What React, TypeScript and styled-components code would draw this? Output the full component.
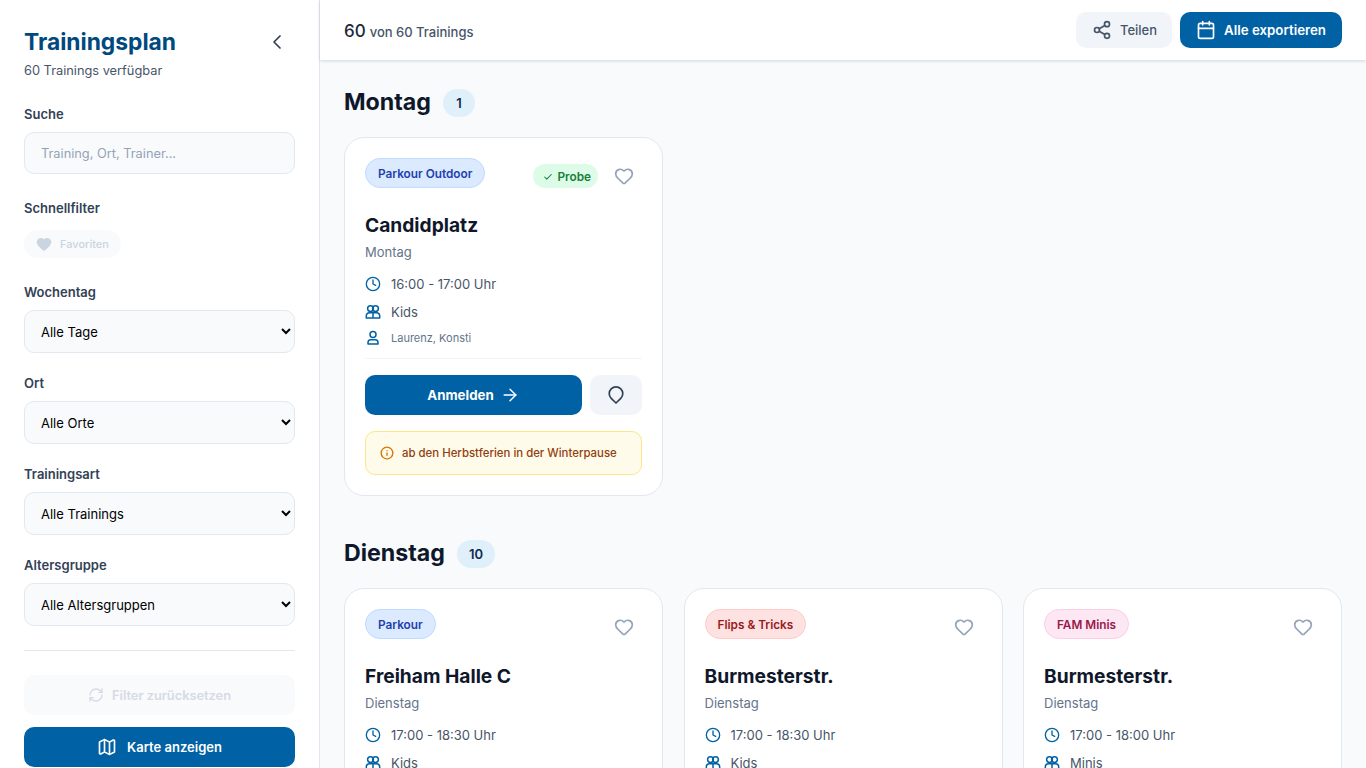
import React from 'react'
import styled, { createGlobalStyle } from 'styled-components'
import { ArrowRight, Calendar, Check, ChevronLeft, Clock, Heart, Info, Map as MapIcon, RefreshCw, Share2 } from 'lucide-react'

const GlobalStyle = createGlobalStyle`
  html, body {
    margin: 0;
    padding: 0;
    height: 100%;
    overflow: hidden;
  }
  body {
    font-family: Inter, "Liberation Sans", sans-serif;
    background: #f8fafc;
    color: #0f172a;
  }
  * {
    box-sizing: border-box;
  }
`

const Layout = styled.div`
  display: flex;
  height: 768px;
  overflow: hidden;
`

const Sidebar = styled.aside`
  flex: 0 0 320px;
  background: #fff;
  border-right: 1px solid #e2e8f0;
  padding: 24px 24px 0;
  display: flex;
  flex-direction: column;
`

const SidebarHead = styled.div`
  display: flex;
  justify-content: space-between;
  align-items: flex-start;
  margin-bottom: 23px;
`

const Title = styled.h1`
  margin: 0;
  font-size: 22.8px;
  line-height: 36px;
  font-weight: 700;
  color: #00497f;
`

const Subtitle = styled.p`
  margin: 1px 0 0;
  font-size: 12.8px;
  line-height: 20px;
  color: #475569;
`

const CollapseButton = styled.button`
  width: 36px;
  height: 36px;
  border: 0;
  background: none;
  padding: 0;
  display: flex;
  align-items: center;
  justify-content: center;
  color: #334155;
`

const Field = styled.div<{ $gap: number }>`
  margin-bottom: ${({ $gap }) => $gap}px;
`

const Label = styled.label<{ $tight?: boolean }>`
  display: block;
  font-size: 13px;
  line-height: 20px;
  font-weight: 600;
  color: #334155;
  margin-bottom: ${({ $tight }) => ($tight ? 12 : 8)}px;
`

const SearchInput = styled.input`
  display: block;
  width: 100%;
  height: 42px;
  padding: 0 16px;
  border: 1px solid #e2e8f0;
  border-radius: 10px;
  background: #f8fafc;
  font-family: inherit;
  font-size: 12.8px;
  &::placeholder {
    color: #94a3b8;
  }
`

const Select = styled.select`
  display: block;
  width: 100%;
  height: 43px;
  padding: 0 12px;
  border: 1px solid #e2e8f0;
  border-radius: 10px;
  background: #f8fafc;
  font-family: inherit;
  font-size: 13px;
  color: #000;
`

const FavoriteChip = styled.span`
  display: inline-flex;
  align-items: center;
  gap: 8px;
  height: 28px;
  padding: 0 12px;
  border-radius: 14px;
  background: #f8fafc;
  font-size: 11px;
  font-weight: 500;
  color: #cbd5e1;
`

const Divider = styled.hr`
  border: 0;
  border-top: 1px solid #e2e8f0;
  margin: 4px 0 24px;
`

const ResetButton = styled.button`
  height: 40px;
  margin-bottom: 12px;
  border: 0;
  border-radius: 10px;
  background: #f8fafc;
  display: flex;
  align-items: center;
  justify-content: center;
  gap: 8px;
  font-family: inherit;
  font-size: 12.8px;
  font-weight: 600;
  color: #d5dbe5;
`

const PrimaryButton = styled.button`
  height: 40px;
  border: 0;
  border-radius: 10px;
  background: #0061a4;
  color: #fff;
  display: flex;
  align-items: center;
  justify-content: center;
  gap: 10px;
  font-family: inherit;
  font-size: 13px;
  font-weight: 600;
`

const Main = styled.main`
  flex: 1;
  min-width: 0;
  display: flex;
  flex-direction: column;
`

const TopBar = styled.header`
  flex: 0 0 60px;
  height: 60px;
  background: #fff;
  box-shadow: 0 1px 3px rgba(15, 23, 42, 0.16);
  display: flex;
  align-items: center;
  justify-content: space-between;
  padding: 0 24px;
  position: relative;
`

const ResultCount = styled.div`
  display: flex;
  align-items: baseline;
  gap: 4px;
  margin-top: 2px;
  font-size: 17px;
  font-weight: 500;
  color: #1e293b;
`

const ResultOf = styled.span`
  font-size: 13px;
  font-weight: 500;
  color: #475569;
`

const TopActions = styled.div`
  display: flex;
  gap: 8px;
`

const ShareButton = styled(PrimaryButton)`
  height: 36px;
  gap: 8px;
  padding: 0 15px 0 16px;
  background: #f1f5f9;
  color: #475569;
  font-size: 13px;
  font-weight: 500;
`

const ExportButton = styled(PrimaryButton)`
  height: 36px;
  gap: 8px;
  padding: 0 16px;
  font-size: 13.3px;
`

const Content = styled.div`
  flex: 1;
  padding: 24px 24px 0;
  overflow: hidden;
`

const DayHeading = styled.div`
  display: flex;
  align-items: center;
  gap: 12px;
  height: 37px;
  margin-bottom: 16px;
`

const DayTitle = styled.h2`
  margin: 0;
  align-self: flex-start;
  font-size: 23.2px;
  line-height: 36px;
  font-weight: 700;
  color: #0f172a;
`

const DayCount = styled.span`
  height: 28px;
  min-width: 32px;
  padding: 0 12px;
  border-radius: 14px;
  background: #e0f0fb;
  display: flex;
  align-items: center;
  justify-content: center;
  font-size: 13px;
  font-weight: 600;
  color: #0f2a4a;
`

const CardGrid = styled.div`
  display: grid;
  grid-template-columns: repeat(3, 1fr);
  gap: 20.5px;
  align-items: start;
  margin-bottom: 39px;
`

const Card = styled.article`
  background: #fff;
  border: 1px solid #e2e8f0;
  border-radius: 20px;
  padding: 20px;
`

const CardTop = styled.div`
  display: flex;
  justify-content: space-between;
  align-items: flex-start;
  margin-bottom: 16px;
`

const CardTopRight = styled.div`
  display: flex;
  align-items: center;
  gap: 8px;
`

const Tag = styled.span<{ $bg: string; $border: string; $color: string }>`
  height: 30px;
  padding: 1px 12px 0;
  border-radius: 15px;
  border: 1px solid ${({ $border }) => $border};
  background: ${({ $bg }) => $bg};
  color: ${({ $color }) => $color};
  display: inline-flex;
  align-items: center;
  font-size: 11.8px;
  font-weight: 600;
`

const ProbeBadge = styled.span`
  height: 24px;
  padding: 1px 7px 0 10px;
  border-radius: 12px;
  background: #dcfce7;
  color: #15803d;
  display: inline-flex;
  align-items: center;
  gap: 4px;
  font-size: 11.8px;
  font-weight: 600;
`

const FavoriteButton = styled.button`
  width: 36px;
  height: 36px;
  border: 0;
  background: none;
  padding: 0;
  display: flex;
  align-items: center;
  justify-content: center;
  color: #94a3b8;
`

const CardTitle = styled.h3`
  margin: 0;
  font-size: 19.2px;
  line-height: 30px;
  font-weight: 700;
  color: #0f172a;
`

const CardDay = styled.p`
  margin: 2px 0 8px;
  font-size: 13px;
  line-height: 20px;
  color: #64748b;
`

const MetaRow = styled.div<{ $small?: boolean }>`
  display: flex;
  align-items: center;
  gap: 10px;
  height: ${({ $small }) => ($small ? '24px' : '28px')};
  font-size: ${({ $small }) => ($small ? '11px' : '13px')};
  color: ${({ $small }) => ($small ? '#64748b' : '#475569')};
  svg {
    flex: 0 0 16px;
    color: #0061a4;
  }
`

const CardActions = styled.div`
  display: flex;
  gap: 8px;
  margin-top: 8px;
  padding-top: 16px;
  border-top: 1px solid #f1f5f9;
`

const SignupButton = styled(PrimaryButton)`
  flex: 1;
  gap: 6px;
  font-size: 13.3px;
  font-weight: 700;
`

const MapButton = styled.button`
  flex: 0 0 52px;
  height: 40px;
  border: 0;
  border-radius: 10px;
  background: #f1f5f9;
  display: flex;
  align-items: center;
  justify-content: center;
  padding: 0;
  color: #334155;
`

const Notice = styled.div`
  margin-top: 16px;
  height: 44px;
  border: 1px solid #fde68a;
  border-radius: 10px;
  background: #fffbeb;
  display: flex;
  align-items: center;
  gap: 8px;
  padding: 0 14px;
  font-size: 11.4px;
  font-weight: 500;
  color: #92400e;
  svg {
    color: #d97706;
    flex: 0 0 14px;
  }
`

// lucide has no matching glyph for these two
const GroupIcon = () => (
  <svg width="16" height="16" viewBox="0 0 16 16" fill="none" stroke="currentColor" strokeWidth="1.5">
    <circle cx="5.5" cy="4.6" r="2.9" />
    <circle cx="10.5" cy="4.6" r="2.9" />
    <path d="M1.3 14v-1.8c0-2 1.5-3.4 3.4-3.4h6.6c1.9 0 3.4 1.4 3.4 3.4V14z" strokeLinejoin="round" />
    <path d="M8 9v5" />
  </svg>
)

const PersonIcon = () => (
  <svg width="16" height="16" viewBox="0 0 16 16" fill="none" stroke="currentColor" strokeWidth="1.5">
    <circle cx="8" cy="4.6" r="3" />
    <path d="M3 14v-1.4c0-1.6 1.2-2.8 2.8-2.8h4.4c1.6 0 2.8 1.2 2.8 2.8V14z" strokeLinejoin="round" />
  </svg>
)

const PinIcon = () => (
  <svg width="20" height="20" viewBox="0 0 20 20" fill="none" stroke="currentColor" strokeWidth="1.7">
    <path d="M10 18 5.2 13.4a6.8 6.8 0 1 1 9.6 0z" strokeLinejoin="round" />
  </svg>
)

type TrainingProps = {
  tag: string
  tagStyle: { $bg: string; $border: string; $color: string }
  place: string
  day: string
  time: string
  group: string
  trainer?: string
  probe?: boolean
  notice?: string
}

const parkourBlue = { $bg: '#dbeafe', $border: '#bfdbfe', $color: '#1e40af' }
const flipsRed = { $bg: '#fee2e2', $border: '#fecaca', $color: '#991b1b' }
const famPink = { $bg: '#fce7f3', $border: '#fbcfe8', $color: '#9d174d' }

function TrainingCard({ tag, tagStyle, place, day, time, group, trainer, probe, notice }: TrainingProps) {
  return (
    <Card>
      <CardTop>
        <Tag {...tagStyle}>{tag}</Tag>
        <CardTopRight>
          {probe && (
            <ProbeBadge>
              <Check size={10} strokeWidth={2.5} />
              Probe
            </ProbeBadge>
          )}
          <FavoriteButton aria-label="Favorit">
            <Heart size={20} />
          </FavoriteButton>
        </CardTopRight>
      </CardTop>
      <CardTitle>{place}</CardTitle>
      <CardDay>{day}</CardDay>
      <MetaRow>
        <Clock size={16} />
        {time}
      </MetaRow>
      <MetaRow>
        <GroupIcon />
        {group}
      </MetaRow>
      {trainer && (
        <MetaRow $small>
          <PersonIcon />
          {trainer}
        </MetaRow>
      )}
      <CardActions>
        <SignupButton>
          Anmelden
          <ArrowRight size={20} strokeWidth={1.75} />
        </SignupButton>
        <MapButton aria-label="Karte">
          <PinIcon />
        </MapButton>
      </CardActions>
      {notice && (
        <Notice>
          <Info size={14} strokeWidth={2.4} />
          {notice}
        </Notice>
      )}
    </Card>
  )
}

const filters = [
  { label: 'Wochentag', value: 'Alle Tage' },
  { label: 'Ort', value: 'Alle Orte' },
  { label: 'Trainingsart', value: 'Alle Trainings' },
  { label: 'Altersgruppe', value: 'Alle Altersgruppen' },
]

export default function App() {
  return (
    <Layout>
      <GlobalStyle />
      <Sidebar>
        <SidebarHead>
          <div>
            <Title>Trainingsplan</Title>
            <Subtitle>60 Trainings verfügbar</Subtitle>
          </div>
          <CollapseButton aria-label="Einklappen">
            <ChevronLeft size={24} strokeWidth={1.75} />
          </CollapseButton>
        </SidebarHead>
        <Field $gap={24}>
          <Label>Suche</Label>
          <SearchInput placeholder="Training, Ort, Trainer..." />
        </Field>
        <Field $gap={24}>
          <Label $tight>Schnellfilter</Label>
          <FavoriteChip>
            <Heart size={16} fill="currentColor" />
            Favoriten
          </FavoriteChip>
        </Field>
        {filters.map(f => (
          <Field key={f.label} $gap={20}>
            <Label>{f.label}</Label>
            <Select defaultValue={f.value}>
              <option>{f.value}</option>
            </Select>
          </Field>
        ))}
        <Divider />
        <ResetButton>
          <RefreshCw size={16} />
          Filter zurücksetzen
        </ResetButton>
        <PrimaryButton>
          <MapIcon size={20} />
          Karte anzeigen
        </PrimaryButton>
      </Sidebar>
      <Main>
        <TopBar>
          <ResultCount>
            60 <ResultOf>von 60 Trainings</ResultOf>
          </ResultCount>
          <TopActions>
            <ShareButton>
              <Share2 size={20} />
              Teilen
            </ShareButton>
            <ExportButton>
              <Calendar size={20} />
              Alle exportieren
            </ExportButton>
          </TopActions>
        </TopBar>
        <Content>
          <DayHeading>
            <DayTitle>Montag</DayTitle>
            <DayCount>1</DayCount>
          </DayHeading>
          <CardGrid>
            <TrainingCard
              tag="Parkour Outdoor"
              tagStyle={parkourBlue}
              place="Candidplatz"
              day="Montag"
              time="16:00 - 17:00 Uhr"
              group="Kids"
              trainer="Laurenz, Konsti"
              probe
              notice="ab den Herbstferien in der Winterpause"
            />
          </CardGrid>
          <DayHeading>
            <DayTitle>Dienstag</DayTitle>
            <DayCount>10</DayCount>
          </DayHeading>
          <CardGrid>
            <TrainingCard tag="Parkour" tagStyle={parkourBlue} place="Freiham Halle C" day="Dienstag" time="17:00 - 18:30 Uhr" group="Kids" />
            <TrainingCard tag="Flips & Tricks" tagStyle={flipsRed} place="Burmesterstr." day="Dienstag" time="17:00 - 18:30 Uhr" group="Kids" />
            <TrainingCard tag="FAM Minis" tagStyle={famPink} place="Burmesterstr." day="Dienstag" time="17:00 - 18:00 Uhr" group="Minis" />
          </CardGrid>
        </Content>
      </Main>
    </Layout>
  )
}
